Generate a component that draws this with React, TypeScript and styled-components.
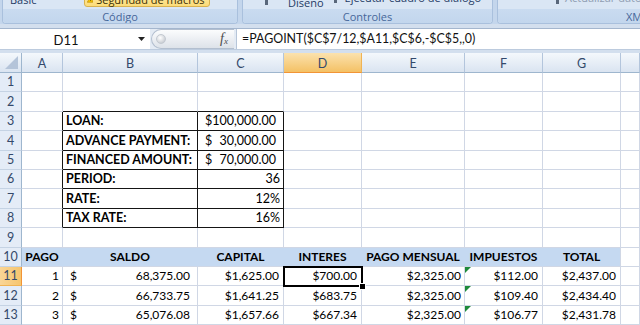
import React from 'react'
import styled, { createGlobalStyle, css } from 'styled-components'

const GlobalStyle = createGlobalStyle`
  html, body {
    margin: 0;
    padding: 0;
  }
  body {
    background: #c7d7eb;
    font-family: Lato, 'Open Sans', sans-serif;
    overflow: hidden;
  }
  * {
    box-sizing: border-box;
  }
`

const GRID = '#d0d7e5'
const BLACK = '#151515'
const HEAD_FILL = '#c5d9f1'

const Workbook = styled.div`
  width: 640px;
  height: 325px;
  overflow: hidden;
  display: flex;
  flex-direction: column;
  background: #cad9ec;
`

/* ribbon (only the bottom strip is on screen) */
const Ribbon = styled.div`
  height: 24px;
  flex: none;
  display: flex;
  gap: 4px;
  padding-left: 2px;
  overflow: hidden;
  background: #c4d6ec;
`

const RibbonGroup = styled.div<{ $width: number }>`
  flex: none;
  width: ${p => p.$width}px;
  display: flex;
  flex-direction: column;
  justify-content: flex-end;
  border: 1px solid #a9c0dd;
  border-top: none;
  border-radius: 0 0 4px 4px;
  background: #dae6f4;
  overflow: hidden;
`

const GroupBody = styled.div`
  height: 9px;
  display: flex;
  align-items: flex-end;
  overflow: hidden;
`

const GroupLabel = styled.div`
  height: 14px;
  line-height: 14px;
  text-align: center;
  font: 11px 'Open Sans', sans-serif;
  color: #46679a;
  background: linear-gradient(#c9dbf0, #c2d6ed);
  white-space: nowrap;
`

const RibbonText = styled.span<{ $ml: number; $mb: number; $muted?: boolean }>`
  flex: none;
  margin-left: ${p => p.$ml}px;
  margin-bottom: ${p => p.$mb}px;
  font: 11px 'Open Sans', sans-serif;
  line-height: 13px;
  color: ${p => (p.$muted ? '#8f9db2' : '#1f3b64')};
  white-space: nowrap;
`

const RibbonIcon = styled.span<{ $ml: number; $mb: number }>`
  flex: none;
  width: 3px;
  height: 10px;
  margin-left: ${p => p.$ml}px;
  margin-bottom: ${p => p.$mb}px;
  background: #59677a;
`

const WarnButton = styled.div`
  flex: none;
  width: 126px;
  height: 20px;
  margin-left: 47px;
  margin-bottom: 2px;
  display: flex;
  align-items: flex-end;
  gap: 3px;
  padding: 0 4px 1px 2px;
  border: 1px solid #d9b24f;
  border-radius: 3px;
  background: linear-gradient(#fff1bd, #fcdc78);
  font: 11px 'Open Sans', sans-serif;
  line-height: 11px;
  color: #3b3007;
  white-space: nowrap;
`

/* formula bar */
const FormulaArea = styled.div`
  flex: none;
  padding: 4px 0 3px;
  background: #d3dfee;
`

const FormulaBar = styled.div`
  height: 22px;
  display: flex;
  background: #fff;
  border-top: 1px solid #a4b6ce;
  border-bottom: 1px solid #bccbde;
`

const NameBox = styled.div`
  width: 150px;
  flex: none;
  display: flex;
  align-items: center;
  font: 13px Lato, sans-serif;
  color: #111;
`

const NameText = styled.span`
  flex: 1;
  text-align: center;
  padding-top: 1px;
`

const DropArrow = styled.span`
  width: 18px;
  display: flex;
  justify-content: center;
  svg {
    display: block;
  }
`

const FxZone = styled.div`
  width: 86px;
  flex: none;
  display: flex;
  padding: 0 2px 0 1px;
  background: #e4ebf4;
`

const FxPill = styled.div`
  flex: 1;
  display: flex;
  align-items: center;
  justify-content: space-between;
  padding: 0 6px 0 4px;
  border: 1px solid #b3bfcf;
  border-right: none;
  border-radius: 10px 0 0 10px;
  background: linear-gradient(#fbfcfd, #dde2e9);
`

const Knob = styled.span`
  width: 10px;
  height: 10px;
  border-radius: 50%;
  background: radial-gradient(circle at 40% 35%, #ffffff, #b9bec6);
  border: 1px solid #c3c9d1;
`

const FxLabel = styled.span`
  font: italic 14px 'Liberation Serif', serif;
  color: #4c4c4c;
  sub {
    font-size: 9px;
    vertical-align: -1px;
  }
`

const FormulaInput = styled.div`
  flex: 1;
  padding-left: 5px;
  border-left: 1px solid #b6c5d8;
  font: 12.4px Lato, sans-serif;
  line-height: 20px;
  color: #111;
  white-space: nowrap;
`

/* sheet grid */
const Sheet = styled.div`
  flex: 1;
  display: grid;
  grid-template-columns: 22px 41px 135px 86px 78px 103px 78px 78px 1fr;
  grid-template-rows: 20px repeat(13, 19.42px);
  background: #fff;
  font-family: Lato, sans-serif;
  font-size: 12px;
  color: #000;
  overflow: hidden;
`

const Corner = styled.div`
  display: flex;
  align-items: flex-end;
  justify-content: flex-end;
  padding: 0 3px 3px 0;
  border-right: 1px solid #9eb6ce;
  border-bottom: 1px solid #9eb6ce;
  background: linear-gradient(#f4f8fc, #dae4f1);
`

const ColHead = styled.div<{ $active?: boolean }>`
  background: ${p =>
    p.$active ? 'linear-gradient(#fbe2ae, #f4c165)' : 'linear-gradient(#f4f8fc, #dae4f1)'};
  color: #33496b;
  display: flex;
  align-items: center;
  justify-content: center;
  padding-top: 2px;
  font-size: 12.5px;
  border-right: 1px solid ${p => (p.$active ? '#f0b354' : '#b3c5dc')};
  border-bottom: 1px solid ${p => (p.$active ? '#f29436' : '#9eb6ce')};
`

const RowHead = styled.div<{ $active?: boolean }>`
  background: ${p => (p.$active ? 'linear-gradient(90deg, #f9d596, #f6c56e)' : '#e4ecf7')};
  color: #34496a;
  display: flex;
  align-items: flex-end;
  justify-content: center;
  padding-bottom: 2px;
  font-size: 12.5px;
  line-height: 14px;
  border-right: 1px solid ${p => (p.$active ? '#f29436' : '#9eb6ce')};
  border-bottom: 1px solid ${p => (p.$active ? '#f0b354' : '#c5d3e4')};
`

type Align = 'left' | 'right' | 'center' | 'split'

const Cell = styled.div<{
  $align: Align
  $bold?: boolean
  $size?: number
  $fill?: string
  $br?: string
  $bb?: string
  $pad: number
  $selected?: boolean
  $flag?: boolean
}>`
  position: relative;
  min-width: 0;
  display: flex;
  align-items: flex-end;
  justify-content: ${p =>
    p.$align === 'right'
      ? 'flex-end'
      : p.$align === 'center'
        ? 'center'
        : p.$align === 'split'
          ? 'space-between'
          : 'flex-start'};
  padding: 0 ${p => p.$pad}px 2px;
  line-height: 14px;
  font-size: ${p => p.$size ?? 12}px;
  font-weight: ${p => (p.$bold ? 700 : 400)};
  white-space: nowrap;
  background: ${p => p.$fill ?? '#fff'};
  border-right: 1px solid ${p => p.$br ?? GRID};
  border-bottom: 1px solid ${p => p.$bb ?? GRID};

  ${p =>
    p.$selected &&
    css`
      z-index: 3;
      &::after {
        content: '';
        position: absolute;
        left: -1px;
        top: -1px;
        right: -2px;
        bottom: -2px;
        border: 2px solid #000;
        pointer-events: none;
      }
    `}

  ${p =>
    p.$flag &&
    css`
      &::before {
        content: '';
        position: absolute;
        left: 0;
        top: 0;
        border-top: 6px solid #1e8a3b;
        border-right: 6px solid transparent;
      }
    `}
`

const FillHandle = styled.span`
  position: absolute;
  right: -5px;
  bottom: -5px;
  width: 7px;
  height: 7px;
  background: #000;
  border: 1px solid #fff;
  z-index: 4;
`

interface CellData {
  v?: string
  cur?: string
  align?: Align
  bold?: boolean
  size?: number
  fill?: string
  br?: string
  bb?: string
  pad?: number
  selected?: boolean
  flag?: boolean
}

const COLUMNS = ['A', 'B', 'C', 'D', 'E', 'F', 'G', '']

const buildRows = (): CellData[][] => {
  const rows: CellData[][] = Array.from({ length: 13 }, () => COLUMNS.map(() => ({})))

  // loan box B3:C8
  rows[1][1].bb = BLACK
  rows[1][2].bb = BLACK
  const box: [string, CellData][] = [
    ['LOAN:', { v: '$', cur: '100,000.00' }],
    ['ADVANCE PAYMENT:', { v: '$', cur: '30,000.00' }],
    ['FINANCED AMOUNT:', { v: '$', cur: '70,000.00' }],
    ['PERIOD:', { v: '36', align: 'right' }],
    ['RATE:', { v: '12%', align: 'right' }],
    ['TAX RATE:', { v: '16%', align: 'right' }],
  ]
  box.forEach(([label, value], i) => {
    const r = rows[i + 2]
    r[0].br = BLACK
    r[1] = { v: label, bold: true, size: 12.5, br: BLACK, bb: BLACK }
    r[2] = {
      ...value,
      size: 12.5,
      align: value.cur ? 'split' : 'right',
      pad: value.cur ? 7 : 3,
      br: BLACK,
      bb: BLACK,
    }
  })

  // table header
  const heads = ['PAGO', 'SALDO', 'CAPITAL', 'INTERES', 'PAGO MENSUAL', 'IMPUESTOS', 'TOTAL']
  heads.forEach((h, c) => {
    rows[9][c] = { v: h, bold: true, align: 'center', fill: HEAD_FILL, br: c < 6 ? HEAD_FILL : GRID }
  })

  const data = [
    ['1', '68,375.00', '$1,625.00', '$700.00', '$2,325.00', '$112.00', '$2,437.00'],
    ['2', '66,733.75', '$1,641.25', '$683.75', '$2,325.00', '$109.40', '$2,434.40'],
    ['3', '65,076.08', '$1,657.66', '$667.34', '$2,325.00', '$106.77', '$2,431.78'],
  ]
  data.forEach((d, i) => {
    const r = rows[10 + i]
    r[0] = { v: d[0], align: 'right', pad: 3 }
    r[1] = { v: '$', cur: d[1], align: 'split', pad: 7 }
    r[2] = { v: d[2], align: 'right', pad: 4 }
    r[3] = { v: d[3], align: 'right', pad: 4, selected: i === 0 }
    r[4] = { v: d[4], align: 'right', pad: 3 }
    r[5] = { v: d[5], align: 'right', pad: 4, flag: true }
    r[6] = { v: d[6], align: 'right', pad: 4 }
  })
  return rows
}

const ROWS = buildRows()

const WarningIcon = () => (
  <svg width="12" height="11" viewBox="0 0 12 11">
    <path d="M6 0.5 L11.5 10.5 L0.5 10.5 Z" fill="#f5c400" stroke="#b07d00" strokeWidth="1" />
    <rect x="5.4" y="3.5" width="1.2" height="4" fill="#000" />
  </svg>
)

const App = () => {
  return (
    <Workbook>
      <GlobalStyle />
      <Ribbon>
        <RibbonGroup $width={236}>
          <GroupBody>
            <RibbonText $ml={7} $mb={3}>
              Basic
            </RibbonText>
            <WarnButton>
              <WarningIcon />
              Seguridad de macros
            </WarnButton>
          </GroupBody>
          <GroupLabel>Código</GroupLabel>
        </RibbonGroup>
        <RibbonGroup $width={251}>
          <GroupBody>
            <RibbonIcon $ml={22} $mb={4} />
            <RibbonText $ml={20} $mb={0}>
              Diseño
            </RibbonText>
            <RibbonIcon $ml={10} $mb={6} />
            <RibbonText $ml={8} $mb={5}>
              Ejecutar cuadro de diálogo
            </RibbonText>
          </GroupBody>
          <GroupLabel>Controles</GroupLabel>
        </RibbonGroup>
        <RibbonGroup $width={280}>
          <GroupBody>
            <RibbonIcon $ml={58} $mb={5} />
            <RibbonText $ml={6} $mb={5} $muted>
              Actualizar datos
            </RibbonText>
          </GroupBody>
          <GroupLabel>XML</GroupLabel>
        </RibbonGroup>
      </Ribbon>

      <FormulaArea>
        <FormulaBar>
          <NameBox>
            <NameText>D11</NameText>
            <DropArrow>
              <svg width="7" height="4" viewBox="0 0 7 4">
                <path d="M0 0 H7 L3.5 4 Z" fill="#222" />
              </svg>
            </DropArrow>
          </NameBox>
          <FxZone>
            <FxPill>
              <Knob />
              <FxLabel>
                f<sub>x</sub>
              </FxLabel>
            </FxPill>
          </FxZone>
          <FormulaInput>=PAGOINT($C$7/12,$A11,$C$6,-$C$5,,0)</FormulaInput>
        </FormulaBar>
      </FormulaArea>

      <Sheet>
        <Corner>
          <svg width="13" height="13" viewBox="0 0 13 13">
            <path d="M13 0 V13 H0 Z" fill="#b4c4d9" />
          </svg>
        </Corner>
        {COLUMNS.map((c, i) => (
          <ColHead key={i} $active={c === 'D'}>
            {c}
          </ColHead>
        ))}
        {ROWS.map((row, r) => (
          <React.Fragment key={r}>
            <RowHead $active={r === 10}>{r + 1}</RowHead>
            {row.map((cell, c) => (
              <Cell
                key={c}
                $align={cell.align ?? 'left'}
                $bold={cell.bold}
                $size={cell.size}
                $fill={cell.fill}
                $br={cell.br}
                $bb={cell.bb}
                $pad={cell.pad ?? 3}
                $selected={cell.selected}
                $flag={cell.flag}
              >
                {cell.v && <span>{cell.v}</span>}
                {cell.cur && <span>{cell.cur}</span>}
                {cell.selected && <FillHandle />}
              </Cell>
            ))}
          </React.Fragment>
        ))}
      </Sheet>
    </Workbook>
  )
}

export default App
